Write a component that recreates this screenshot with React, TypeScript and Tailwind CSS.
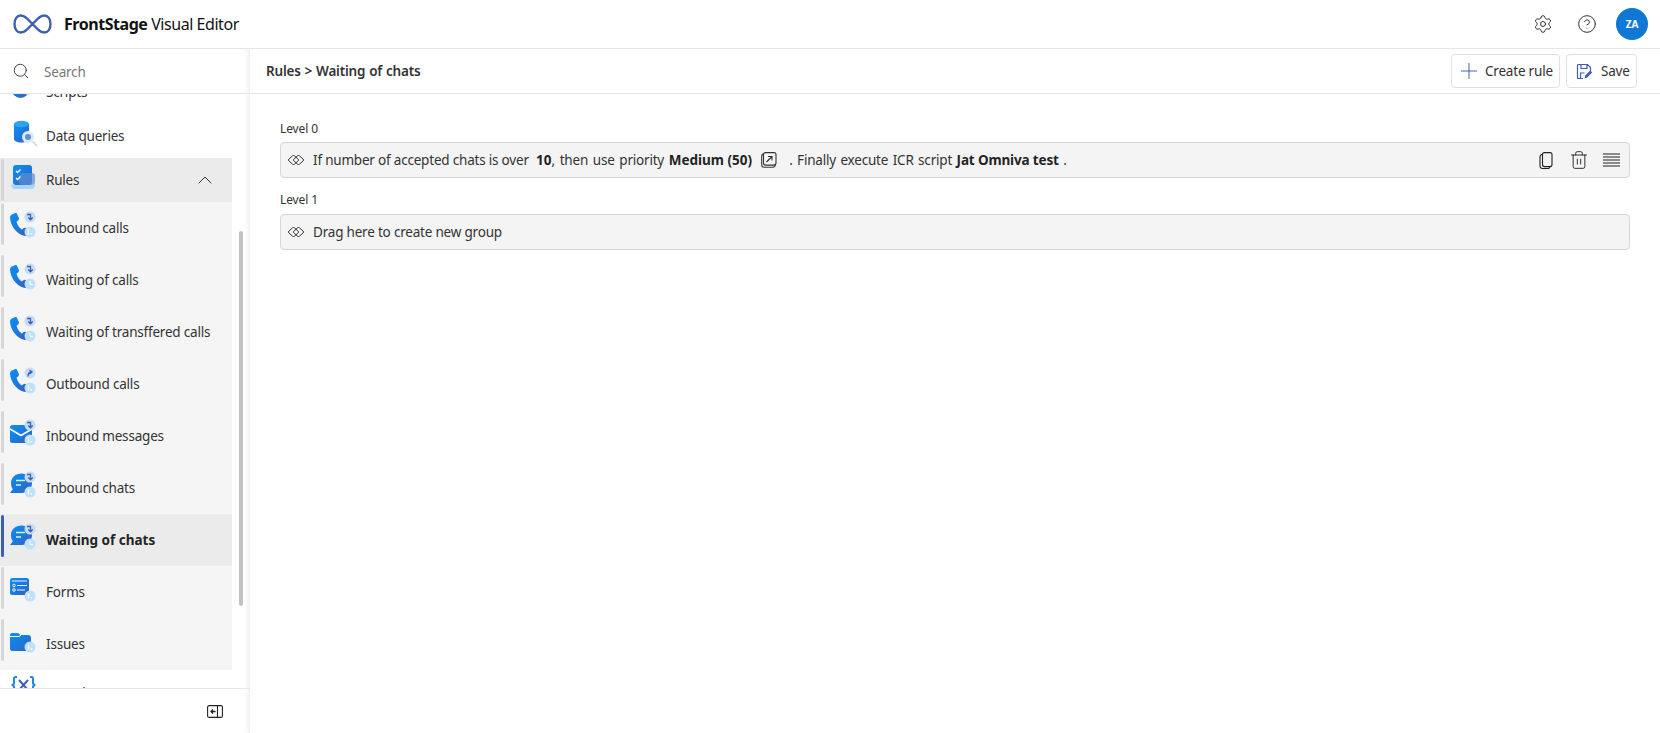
import { ChevronUp, CircleHelp, Plus, Search, Settings, Trash2 } from "lucide-react";
import type { ReactNode } from "react";

const FONT = "font-['Noto_Sans','Open_Sans',sans-serif]";

function Gradients() {
  return (
    <svg width="0" height="0" className="absolute">
      <defs>
        <linearGradient id="blue" x1="0" y1="0" x2="1" y2="1">
          <stop offset="0" stopColor="#0a90f5" />
          <stop offset="0.55" stopColor="#1b78dc" />
          <stop offset="1" stopColor="#3f5fb0" />
        </linearGradient>
      </defs>
    </svg>
  );
}

// upper badge: arrow in or out
function Upper({ out }: { out?: boolean }) {
  return (
    <>
      <circle cx="21" cy="6" r="5.500" fill="#c6dcf6" />
      {out ? (
        <path d="M19 9.500c0-3 1-4.500 3.500-4.500M20.500 3l2.500 2-2.500 2" fill="none" stroke="#3f5fb0" strokeWidth="1.300" />
      ) : (
        <path d="M18 3.500h3.500v5M19.300 6.500l2.200 2.300 2.200-2.300" fill="none" stroke="#3f5fb0" strokeWidth="1.300" />
      )}
    </>
  );
}

// lower badge: clock or exclamation mark
function Lower({ clock, y = 21 }: { clock?: boolean; y?: number }) {
  return (
    <>
      <circle cx="21" cy={y} r="5.500" fill="#bfe0fa" />
      {clock ? (
        <path d={`M21 ${y - 3}v3.500h3`} fill="none" stroke="#fff" strokeWidth="1" />
      ) : (
        <path d={`M19.500 ${y - 2.500}v5M22.500 ${y + 1}v1.500`} fill="none" stroke="#fff" strokeWidth="1.400" />
      )}
    </>
  );
}

function Phone({ out, clock }: { out?: boolean; clock?: boolean }) {
  return (
    <svg width="28" height="28" viewBox="0 0 28 28">
      <path d="M3 3.500 5.800 2.200c1.200-.4 2 .1 2.500 1.200l1.500 3.500c.4 1 .1 1.800-.7 2.500L7.500 10.800c1 3.600 3 6.300 5.500 7.700l1.300-1.200c.7-.6 1.500-.7 2.300-.3l1.700 1c1 .6 1.200 1.500.9 2.500l-.8 2.400c-.5 1.500-2 2.300-3.600 1.900C7.500 23 1.300 14.500 1 6.500c0-1.300.8-2.300 2-3Z" fill="url(#blue)" />
      <Upper out={out} />
      <Lower clock={clock} />
    </svg>
  );
}

function Mail() {
  return (
    <svg width="28" height="28" viewBox="0 0 28 28">
      <rect x="1" y="6" width="22" height="18" rx="2.500" fill="url(#blue)" />
      <path d="M1 10 12 16.500 23 10" fill="none" stroke="#fff" strokeWidth="1.600" />
      <Upper />
      <Lower />
    </svg>
  );
}

function Chat({ clock }: { clock?: boolean }) {
  return (
    <svg width="28" height="28" viewBox="0 0 28 28">
      <path d="M12.500 2.500C18.500 2.500 23 6.500 23 12s-4.500 10-10.500 10H1l2.800-3.800C2.500 16.500 2 14.500 2 12 2 6.500 6.500 2.500 12.500 2.500Z" fill="url(#blue)" />
      <path d="M7 9.500h9M7 14h5" stroke="#dcecfb" strokeWidth="1.700" />
      <Upper />
      <Lower clock={clock} />
    </svg>
  );
}

function Form() {
  return (
    <svg width="28" height="28" viewBox="0 0 28 28">
      <rect x="1" y="3" width="19" height="17" rx="2.500" fill="url(#blue)" />
      <path d="M3 6h15M8 10.500h10M8 15h8" stroke="#e4f0fb" strokeWidth="1.100" />
      <circle cx="5" cy="10.500" r="1.300" fill="none" stroke="#e4f0fb" />
      <circle cx="5" cy="15" r="1.300" fill="none" stroke="#e4f0fb" />
      <Lower />
    </svg>
  );
}

function Folder() {
  return (
    <svg width="28" height="28" viewBox="0 0 28 28">
      <path d="M1 8c0-1 .7-2 2-2h6l2.500 2H19c2 0 3 1.200 3 3v10c0 1.700-1.200 3-3 3H3c-1.200 0-2-1-2-2.500Z" fill="url(#blue)" />
      <path d="M1 9.500h9L12 8" fill="none" stroke="#fff" strokeWidth="1" />
      <Lower y={20} />
    </svg>
  );
}

function RulesIcon() {
  return (
    <svg width="28" height="28" viewBox="0 0 28 28">
      <rect x="3" y="2" width="19" height="20" rx="3" fill="url(#blue)" />
      <rect x="9" y="10" width="16" height="12" rx="3" fill="#5a8fd4" opacity=".7" />
      <path d="M1 21c1 .7 2 1 3 1h18c1 0 2-.3 3-1v1c0 2-1.500 4-3.500 4H5c-2 0-4-2-4-5Z" fill="#a8d4f6" />
      <path d="m6 8 1.500 1.500 3-3M6 15l1.500 1.500 3-3" fill="none" stroke="#fff" strokeWidth="1.300" />
    </svg>
  );
}

function DataIcon() {
  return (
    <svg width="28" height="28" viewBox="0 0 28 28">
      <path d="M1 4v15c0 2 3.500 3.500 7.500 3.500S16 21 16 19V4Z" fill="url(#blue)" />
      <ellipse cx="8.500" cy="4" rx="7.500" ry="3.300" fill="#2da2ef" />
      <circle cx="15" cy="17" r="6" fill="#dce9f8" />
      <circle cx="15" cy="17" r="3" fill="#5f8fcf" />
      <path d="m19.500 21.500 4.500 4.500" stroke="#c8d4e2" strokeWidth="1.500" />
    </svg>
  );
}

function ScriptsIcon() {
  return (
    <svg width="28" height="28" viewBox="0 0 28 28">
      <circle cx="10.500" cy="9" r="9" fill="url(#blue)" />
      <path d="M18 12h5l-3 3h-4Z" fill="#d8e4f0" />
    </svg>
  );
}

function VarsIcon() {
  return (
    <svg width="28" height="28" viewBox="0 0 28 28">
      <path d="M6 3H4.500C3.500 3 3 3.500 3 4.500v5L1.500 11 3 12.500v7M19 3h1.500c1 0 1.500.5 1.500 1.500v5l1.500 1.500L22 12.500v7" fill="none" stroke="#1e88e5" strokeWidth="2" />
      <path d="m8 6 9 10M17 6 8 16" stroke="#3f5fb0" strokeWidth="2" />
    </svg>
  );
}

function Group() {
  return (
    <svg width="16" height="10" viewBox="0 0 16 10" className="shrink-0">
      <path d="M4.500.8.800 4.200a1.100 1.100 0 0 0 0 1.600L4.500 9.200c.6.500 1.400.500 2 0l3.700-3.400a1.100 1.100 0 0 0 0-1.600L6.500.8c-.6-.5-1.400-.5-2 0Z" fill="none" stroke="#333" strokeWidth="1" />
      <path d="M9.500.8 5.800 4.200a1.100 1.100 0 0 0 0 1.600L9.500 9.200c.6.500 1.400.500 2 0l3.700-3.400a1.100 1.100 0 0 0 0-1.600L11.500.8c-.6-.5-1.400-.5-2 0Z" fill="none" stroke="#333" strokeWidth="1" />
    </svg>
  );
}

function SubRow({ icon, label, active }: { icon: ReactNode; label: string; active?: boolean }) {
  return (
    <div className={active ? "h-[52px] flex items-start bg-[#ebebeb] pl-[1px]" : "h-[52px] flex items-start pl-[1px]"}>
      <span className={active ? "mt-[1px] w-[3px] h-[42px] rounded-sm bg-[#3f5fa8]" : "mt-[1px] w-[3px] h-[42px] rounded-sm bg-[#d6d6d6]"} />
      <span className="ml-[5px] mt-[9px] w-[37px] h-[28px] flex">{icon}</span>
      <span className={active ? "h-[52px] flex items-center font-bold tracking-[0px] text-[#242424]" : "h-[52px] flex items-center text-[#333]"}>{label}</span>
    </div>
  );
}

export default function App() {
  return (
    <div className={`${FONT} h-[733px] w-[1660px] overflow-hidden bg-white flex flex-col text-[13.5px] tracking-[-0.2px] text-[#333]`}>
      <Gradients />

      {/* Header */}
      <header className="h-[49px] shrink-0 border-b border-[#e6e6e6] flex items-center pl-[13px] pr-[12px]">
        <svg width="39" height="20" viewBox="0 0 39 20">
          <path d="M19.500 10 13.500 4C11.500 2.200 9.500 1.500 7.500 1.500 4 1.500 1.500 5 1.500 10s2.500 8.500 6 8.500c2 0 4-.7 6-2.500Zm0 0 6-6c2-1.800 4-2.500 6-2.500 3.500 0 6 3.500 6 8.500s-2.500 8.500-6 8.500c-2 0-4-.7-6-2.500Z" fill="none" stroke="#3f5fb0" strokeWidth="2.400" />
        </svg>
        <span className="ml-[12px] pb-[1px] text-[16px] tracking-[-0.45px] text-[#111]"><b className="font-bold">FrontStage</b> Visual Editor</span>
        <div className="ml-auto flex items-center">
          <Settings size={20} strokeWidth={1.200} className="text-[#333]" />
          <CircleHelp size={20} strokeWidth={1.200} className="ml-[24px] text-[#333]" />
          <span className="ml-[19px] w-[32px] h-[32px] rounded-full bg-[#0f78d4] text-white text-[10px] font-bold flex items-center justify-center">ZA</span>
        </div>
      </header>

      <div className="flex-1 min-h-0 flex">
        {/* Sidebar */}
        <aside className="relative w-[250px] shrink-0 flex flex-col shadow-[inset_-5px_0_5px_-3px_rgba(0,0,0,0.07)]">
          <div className="h-[45px] shrink-0 border-b border-[#e6e6e6] flex items-center pl-[12px]">
            <Search size={18} strokeWidth={1.200} className="text-[#333]" />
            <span className="ml-[14px] pt-[3px] text-[#777]">Search</span>
          </div>
          <div className="flex-1 min-h-0 overflow-hidden">
            <div className="-mt-[24px] w-[232px]">
              <div className="h-[44px] flex items-start pl-[10px]">
                <span className="w-[36px] h-[28px] flex mt-[10px]"><ScriptsIcon /></span>
                <span className="h-[44px] flex items-center">Scripts</span>
              </div>
              <div className="h-[44px] flex items-start pl-[13px]">
                <span className="w-[33px] h-[28px] flex mt-[6px]"><DataIcon /></span>
                <span className="h-[44px] flex items-center">Data queries</span>
              </div>
              <div className="h-[44px] flex items-center bg-[#ebebeb] pl-[1px]">
                <span className="w-[3px] h-[42px] rounded-sm bg-[#d6d6d6]" />
                <span className="ml-[6px] w-[36px] h-[28px] flex self-start mt-[5px]"><RulesIcon /></span>
                <span>Rules</span>
                <ChevronUp size={24} strokeWidth={1} className="ml-auto mr-[15px] text-[#333]" />
              </div>
              <div className="bg-[#f5f5f5]">
                <SubRow icon={<Phone />} label="Inbound calls" />
                <SubRow icon={<Phone clock />} label="Waiting of calls" />
                <SubRow icon={<Phone clock />} label="Waiting of transffered calls" />
                <SubRow icon={<Phone out />} label="Outbound calls" />
                <SubRow icon={<Mail />} label="Inbound messages" />
                <SubRow icon={<Chat />} label="Inbound chats" />
                <SubRow icon={<Chat clock />} label="Waiting of chats" active />
                <SubRow icon={<Form />} label="Forms" />
                <SubRow icon={<Folder />} label="Issues" />
              </div>
              <div className="h-[44px] flex items-start pl-[11px]">
                <span className="w-[35px] h-[28px] flex mt-[4px]"><VarsIcon /></span>
                <span className="h-[44px] pt-[2px] flex items-center">Metadata</span>
              </div>
            </div>
          </div>
          <div className="h-[45px] shrink-0 border-t border-[#e6e6e6] flex items-center justify-end pr-[27px]">
            <svg width="16" height="13" viewBox="0 0 16 13">
              <rect x=".6" y=".6" width="14.800" height="11.800" rx="1.500" fill="none" stroke="#222" strokeWidth="1.100" />
              <path d="M10.500 1v11" stroke="#222" strokeWidth="1.100" />
              <path d="M8.500 6.500H4M6 4.500l-2 2 2 2" fill="none" stroke="#222" strokeWidth="1.300" />
            </svg>
          </div>
          <span className="absolute left-[239px] top-[182px] w-[4px] h-[375px] rounded-full bg-[#c2c2c2]" />
        </aside>

        {/* Main */}
        <main className="flex-1 min-w-0 flex flex-col">
          <div className="h-[45px] shrink-0 border-b border-[#e6e6e6] flex items-center pl-[16px] pr-[23px]">
            <span className="font-semibold [word-spacing:0.6px]">Rules &gt; Waiting of chats</span>
            <button className="ml-auto h-[34px] w-[109px] rounded border border-[#e0e0e0] flex items-center pl-[4px]">
              <Plus size={26} strokeWidth={0.900} className="text-[#3f5fb0]" />
              <span className="ml-[3px]">Create rule</span>
            </button>
            <button className="ml-[6px] h-[34px] w-[71px] rounded border border-[#e0e0e0] flex items-center pl-[9px]">
              <svg width="17" height="17" viewBox="0 0 17 17">
                <path d="M2.500 1.500h9l3 3v4M7 15.500H2.500a1 1 0 0 1-1-1v-12a1 1 0 0 1 1-1M5 1.500v4h6v-4M4.500 15v-5h4" fill="none" stroke="#3f5fb0" strokeWidth="1.200" />
                <path d="m8.500 15.500.7-3 5-5 2 2-5 5Z" fill="#3f5fb0" />
              </svg>
              <span className="ml-[8px]">Save</span>
            </button>
          </div>

          <div className="pl-[30px] pr-[30px] pt-[27px]">
            <p className="text-[12px] tracking-[-0.1px] leading-[16px]">Level 0</p>
            <div className="mt-[5px] h-[36px] rounded border border-[#d6d6d6] bg-[#f4f4f4] flex items-center pl-[7px] pr-[9px]">
              <Group />
              <span className="ml-[9px] whitespace-pre">If number of accepted chats is over <b className="ml-[4px] tracking-[0px] text-[#242424]">10</b><span className="[word-spacing:1.400px]">, then use priority </span><b className="tracking-[0px] text-[#242424]">Medium (50)</b></span>
              <svg width="16" height="16" viewBox="0 0 16 16" className="ml-[9px]">
                <rect x=".7" y="1.700" width="13.500" height="13.500" rx="2.500" fill="none" stroke="#333" strokeWidth="1.100" />
                <rect x="2.500" y=".6" width="12.500" height="12.500" rx="2" fill="#f4f4f4" stroke="#333" strokeWidth="1.100" />
                <path d="M5.500 10 11 4.500M7 4.500h4v4" fill="none" stroke="#333" strokeWidth="1.100" />
              </svg>
              <span className="ml-[12px] whitespace-pre [word-spacing:1.200px]">. Finally execute ICR script <b className="tracking-[-0.15px] [word-spacing:0px] text-[#242424]">Jat Omniva test</b> .</span>
              <div className="ml-auto flex items-center">
                <svg width="14" height="17" viewBox="0 0 14 17">
                  <rect x="3.500" y=".6" width="9.500" height="14" rx="2" fill="none" stroke="#222" strokeWidth="1.100" />
                  <path d="M3.500 2.200C2 2.500 1 3.500 1 5v9c0 1.500 1 2.500 2.500 2.500H9c.8 0 1.500-.5 2-1.500" fill="none" stroke="#222" strokeWidth="1.100" />
                </svg>
                <Trash2 size={20} strokeWidth={1.100} className="ml-[16px] text-[#222]" />
                <svg width="17" height="14" viewBox="0 0 17 14" className="ml-[14px]">
                  <path d="M0 1h17M0 4h17M0 7h17M0 10h17M0 13h17" stroke="#222" strokeWidth="1" />
                </svg>
              </div>
            </div>
            <p className="mt-[14px] text-[12px] tracking-[-0.1px] leading-[16px]">Level 1</p>
            <div className="mt-[6px] h-[36px] rounded border border-[#d6d6d6] bg-[#f4f4f4] flex items-center pl-[7px]">
              <Group />
              <span className="ml-[9px]">Drag here to create new group</span>
            </div>
          </div>
        </main>
      </div>
    </div>
  );
}
